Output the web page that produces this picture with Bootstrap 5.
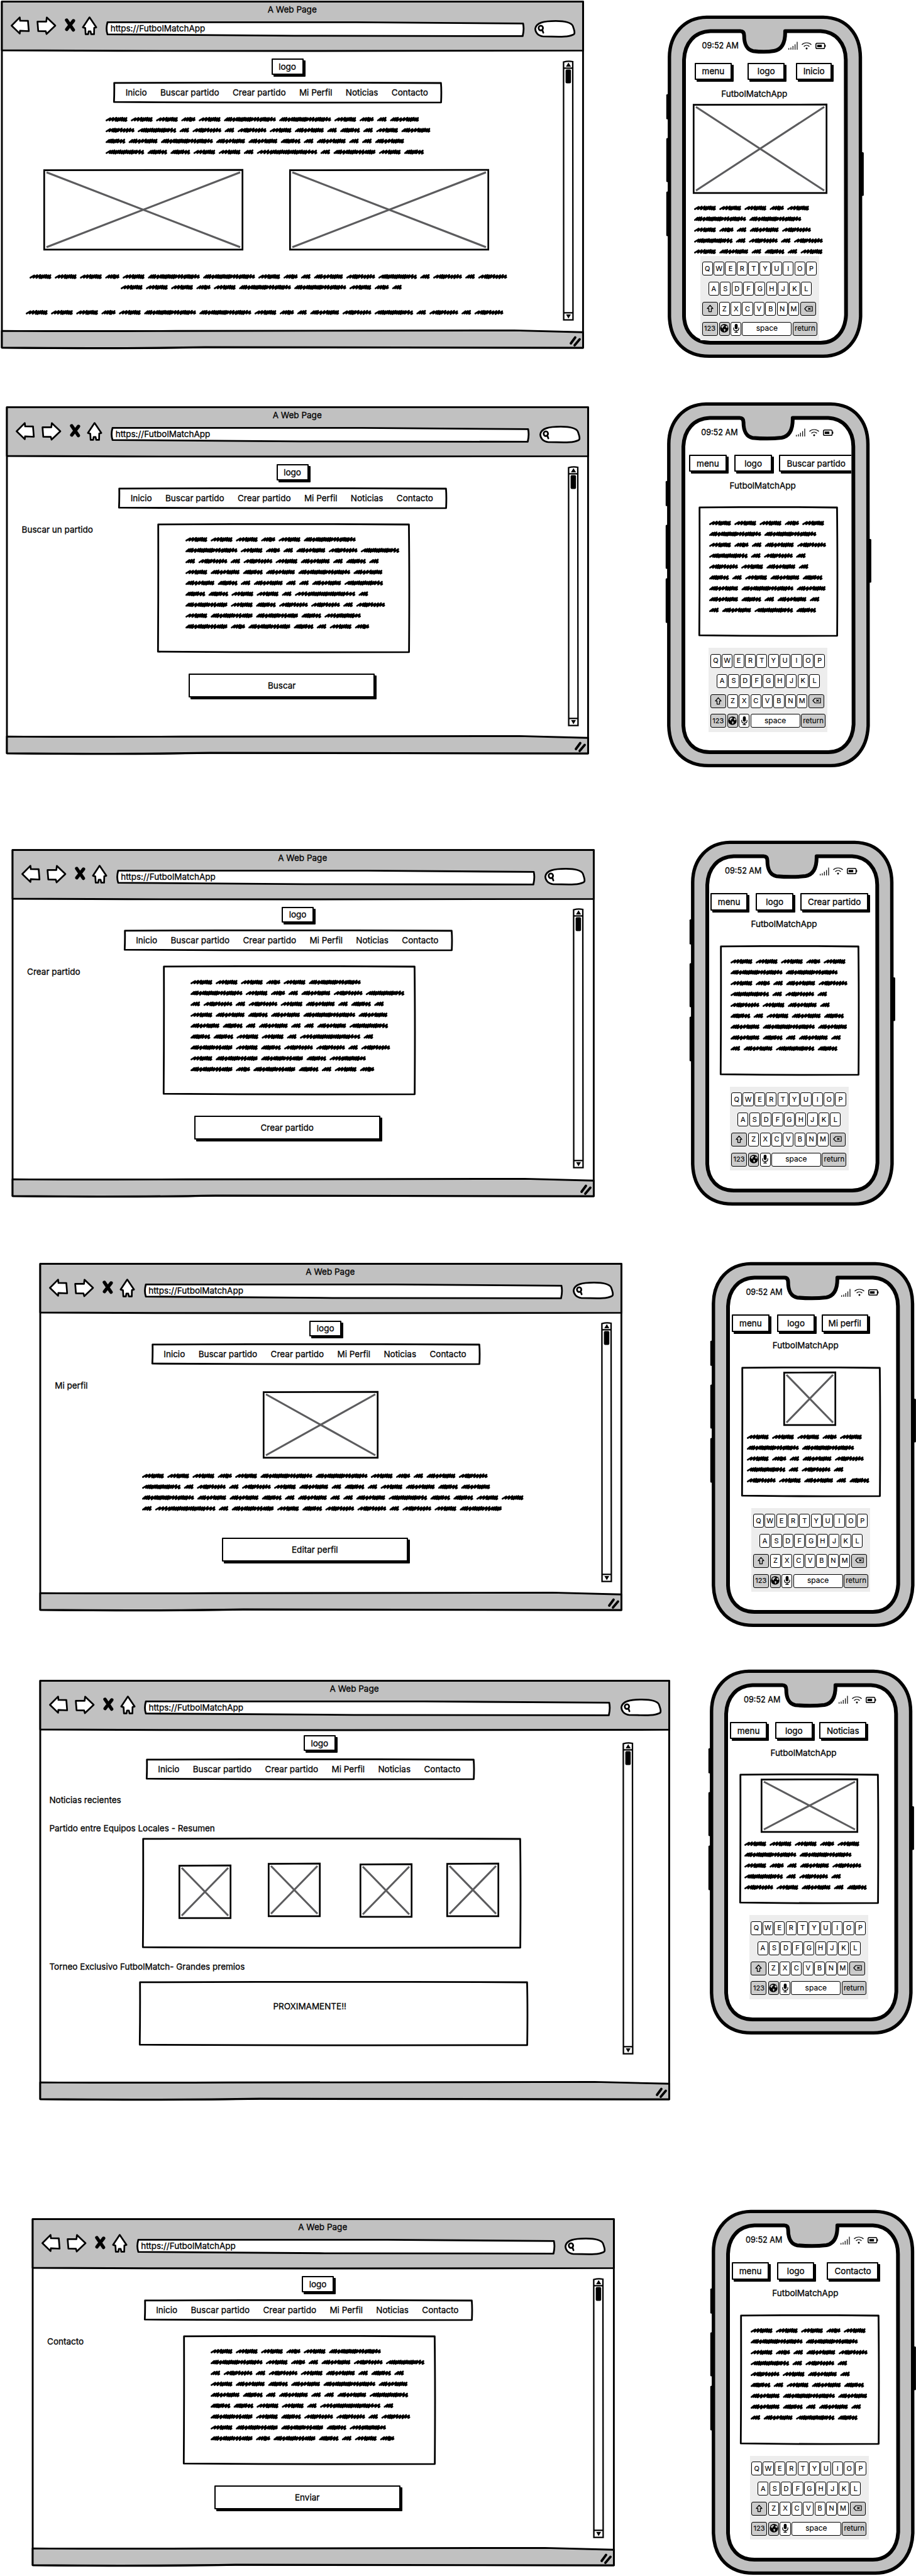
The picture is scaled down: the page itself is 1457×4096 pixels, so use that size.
<!DOCTYPE html>
<html lang="es">
<head>
<meta charset="utf-8">
<meta name="viewport" content="width=device-width, initial-scale=1">
<title>FutbolMatchApp wireframes</title>
<link href="https://cdn.jsdelivr.net/npm/bootstrap@5.3.0/dist/css/bootstrap.min.css" rel="stylesheet">
<style>
  body { font-family: Inter, "Open Sans", sans-serif; font-size: 13.5px; line-height: 20px; color: #000; background: #fff; overflow-x: hidden; -webkit-text-stroke: .3px #000; }
  svg { display: block; overflow: visible; }
  .ink-layer { position: absolute; left: 0; top: 0; pointer-events: none; }
  .ink > :not(.ink-layer), .browser > :not(.ink-layer), .phone > :not(.ink-layer) { position: relative; }

  /* board rows */
  .board { width: 1457px; height: 4096px; overflow: hidden; }
  .r1 { height: 620px; } .r2 { height: 700px; } .r3 { height: 660px; }
  .r4 { height: 650px; } .r5 { height: 860px; } .r6 { height: 606px; }

  /* browser window */
  .browser { width: 927.5px; height: 554px; flex: none; }
  .r1 .browser { margin: 1px 0 0 1px; }
  .r2 .browser { margin: 26px 0 0 9px; }
  .r3 .browser { margin: 29.5px 0 0 17.5px; }
  .r4 .browser { margin: 27.5px 0 0 61.6px; }
  .r5 .browser { margin: 40.6px 0 0 61.8px; width: 1003.6px; height: 669px; }
  .r6 .browser { margin: 37px 0 0 49.5px; }
  .chrome { height: 81px; padding-top: 4px; }
  .tools { height: 34px; padding: 0 13px 0 16.4px; margin-top: 1px; }
  .ico-fwd { margin-left: 10.5px; } .ico-stop { margin-left: 13.5px; } .ico-home { margin-left: 10px; }
  .url-box { height: 24px; margin: 8px 16px 0 14px; padding: 1px 0 0 7.3px; }
  .find-box { width: 65.6px; margin-top: 5.6px; }
  .pane { height: 442px; }
  .r5 .pane { height: 557px; }
  .track { width: 17.6px; height: 413.5px; margin: 13.8px 16px 0 0; }
  .r5 .track { height: 497px; margin: 18px 58.3px 0 0; }

  .sketch-btn { height: 25.5px; background: #fff; border: 2.4px solid #000; box-shadow: 3px 3px 0 #000; color: #000; font-size: 13.5px; line-height: 20px; padding: 0; border-radius: 1px; flex: none; display: flex; align-items: center; justify-content: center; white-space: nowrap; }
  .logo-btn { width: 51px; margin: 11px 0 0 430.6px; }
  .r5 .logo-btn { margin: 7.4px 0 0 421px; }
  .site-nav { width: 522.6px; height: 34px; margin: 11.3px 0 0 179.2px; padding-left: 19.5px; gap: 21.4px; }
  .r5 .site-nav { margin: 11.7px 0 0 170px; }
  .action { width: 296px; height: 38px; margin: 32.6px 0 0 291.2px; }
  .r4 .action { margin-top: 37.3px; }
  .lbl { margin-left: 25.6px; width: 215.9px; flex: none; }
  .panel-row { margin-top: 23.2px; }
  .panel-box { width: 402px; height: 206px; padding: 17.3px 0 0 44.5px; }

  .r1 .p1 { margin: 17.2px 0 0 166.7px; }
  .r1 .shots { margin: 18.8px 0 0 68.4px; gap: 72.7px; }
  .r1 .shot { width: 317.5px; height: 129.2px; }
  .r1 .p2 { margin: 32.4px 0 0 46.4px; }
  .r1 .p3 { margin: 0 0 0 191px; }
  .r1 .p4 { margin: 23.3px 0 0 39.8px; }
  .r4 .lbl { margin-top: 22.5px; }
  .r4 .portrait { width: 183.5px; height: 107px; margin: -.7px 0 0 356.7px; }
  .r4 .p1 { margin: 19px 0 0 164px; }
  .r5 .lbl { margin-left: 16.6px; width: auto; }
  .lbl.n1 { margin-top: 22.2px; } .lbl.n2 { margin-top: 24.2px; } .lbl.n3 { margin-top: 18.8px; }
  .gallery { width: 603px; height: 175.8px; margin: 5.8px 0 0 164.7px; padding: 39.5px 0 0 57.2px; }
  .gallery .shot { width: 83.7px; height: 86px; }
  .gallery .g1 { margin: 3.5px 58.4px 0 0; } .gallery .g2 { margin-right: 63px; } .gallery .g3 { margin: .9px 53.8px 0 0; }
  .soon { width: 619px; height: 103px; margin: 12.6px 0 0 159.4px; padding: 30.5px 0 0 213.2px; }

  /* phone */
  .phone { width: 322.3px; height: 580px; flex: none; }
  .r1 .phone { width: 308.7px; height: 543.8px; margin: 24.7px 0 0 133.5px; }
  .r2 .phone { margin: 19.6px 0 0 124.2px; }
  .r3 .phone { margin: 17px 0 0 153.6px; }
  .r4 .phone { margin: 27px 0 0 142.8px; }
  .r5 .phone { margin: 24.6px 0 0 63.2px; }
  .r6 .phone { margin: 24px 0 0 154.5px; }
  .screen { margin: 0 29px 0 29px; padding-top: 39px; height: 100%; overflow: hidden; }
  .status { height: 18px; padding: 0 27.5px 0 25.5px; font-size: 12.6px; }
  .status-icons { gap: 6px; }
  .keys-top { margin-top: 26.4px; height: 31px; }
  .r1 .keys-top { margin-top: 18px; padding-left: 13.7px; }
  .keys-top .sketch-btn { height: 27.5px; width: 59.5px; }
  .r1 .b2 { margin: 0 17.4px 0 24.8px; } .r1 .keys-top .b3 { width: 57.5px; }
  .r2 .keys-top { padding-left: 6.5px; } .r2 .b2 { margin: 0 10.8px 0 12.7px; } .r2 .keys-top .b3 { width: 119px; }
  .r3 .keys-top { padding-left: 2.3px; } .r3 .b2 { margin: 0 11px 0 13px; } .r3 .keys-top .b3 { width: 108.5px; }
  .r4 .keys-top, .r5 .keys-top, .r6 .keys-top { padding-left: 3.3px; }
  .r4 .b2, .r5 .b2 { margin: 0 10.7px 0 12.7px; } .r4 .keys-top .b3 { width: 74px; } .r5 .keys-top .b3 { width: 75px; }
  .r6 .b2 { margin: 0 20px 0 12.7px; } .r6 .keys-top .b3 { width: 82px; }
  .app-name { margin: 8px 0 0 70.9px; }
  .r1 .app-name { margin-left: 56.2px; } .r3 .app-name { margin-left: 66.8px; }
  .r4 .app-name, .r5 .app-name, .r6 .app-name { margin-left: 67.8px; }
  .screen-box { width: 222px; height: 206.6px; margin: 23.5px 0 0 21px; padding: 17.2px 0 0 17.6px; }
  .r3 .screen-box { margin-left: 17.2px; }
  .r4 .screen-box, .r5 .screen-box { margin-left: 18px; padding: 7.7px 0 0 8.8px; }
  .r6 .screen-box { margin-left: 16px; }
  .r4 .screen-box .shot { width: 84.3px; height: 86px; margin: 0 0 9.3px 57.9px; }
  .r5 .screen-box .shot { width: 155.4px; height: 86px; margin: 0 0 9.3px 25.2px; }
  .r1 .hero { width: 214.2px; height: 143.3px; margin: 6px 0 14px 11.2px; }
  .r1 .screen .hand { margin-left: 13px; }
  .keyboard { width: 189.2px; height: 133.6px; background: #ededed; margin: 18.4px 0 0 37.6px; padding: 9.3px 2.5px; gap: 9.9px; font-size: 11px; flex: none; -webkit-text-stroke-width: .15px; }
  .r1 .keyboard { margin: -1.5px 0 0 23.1px; }
  .r3 .keyboard { margin-left: 33px; } .r4 .keyboard, .r5 .keyboard { margin-left: 34.4px; } .r6 .keyboard { margin-left: 32px; }
  .krow { display: flex; gap: 1.2px; height: 22px; }
  .krow.mid { padding-left: 10.2px; }
  .kkey { width: 17.2px; height: 22px; flex: none; border: 1.4px solid #000; border-radius: 3px; background: #fff; display: flex; align-items: center; justify-content: center; line-height: 18px; padding-bottom: 1px; }
  .kkey.dim { background: #cbcbcb; }
  .kkey.wide { width: 25px; margin-right: .9px; } .kkey.bar { width: 79px; margin-right: .3px; font-size: 12px; } .kkey.ret { width: 39px; font-size: 11.5px; }
  .kkey.del { margin-left: 1px; }
</style>
</head>
<body>
<svg width="0" height="0" class="position-absolute">
  <defs>
    <symbol id="i-shift" viewBox="0 0 12 13"><path d="M6 1 11 6.6H8.2V12H3.8V6.6H1Z" fill="none" stroke="#000" stroke-width="1.4" stroke-linejoin="round"/></symbol>
    <symbol id="i-del" viewBox="0 0 15 10"><path d="M4.6 1H14V9H4.6L1 5Z" fill="none" stroke="#000" stroke-width="1.3" stroke-linejoin="round"/><path d="m7 3.3 4 3.4m0-3.4L7 6.7" stroke="#000" stroke-width="1.4"/></symbol>
    <symbol id="i-globe" viewBox="0 0 14 14"><circle cx="7" cy="7" r="6.7"/><path d="M2 4.5 4.5 2 7.5 2.3 6.6 4 4.8 5 5.2 6.6 3.6 6.8ZM9 3.4 11.5 3 12.6 5.5 10.6 6.6 9.6 5.4ZM6.4 8 8.8 8.4 8.8 10.2 7.4 12.4 6.4 10.6Z" fill="#cbcbcb"/></symbol>
    <symbol id="i-mic" viewBox="0 0 10 14"><rect x="2.7" y="0" width="4.6" height="8.6" rx="2.3"/><path d="M.8 5.8v1.4c0 5 8.4 5 8.4 0V5.8M5 11v2.3M2.4 13.3h5.2" fill="none" stroke="#000" stroke-width="1.2"/></symbol>
    <symbol id="i-signal" viewBox="0 0 15 13"><path d="M.7 10.5V13M4 9.5V13M7.3 7V13M10.6 4.5V13M14 .5V13" stroke="#000" stroke-width="1.2"/></symbol>
    <symbol id="i-wifi" viewBox="0 0 16 12"><path d="M.5 4C4.5 0 11.5 0 15.5 4M3.6 7c2.6-2.6 6.2-2.6 8.8 0" fill="none" stroke="#000" stroke-width="1.2"/><circle cx="8" cy="10" r="1.5"/></symbol>
    <symbol id="i-bat" viewBox="0 0 17 10"><rect x=".8" y=".8" width="13.8" height="8.4" rx="1.8" fill="none" stroke="#000" stroke-width="1.5"/><rect x="2.8" y="3.2" width="7.4" height="3.8"/><path d="M15.6 3.4v3.2" stroke="#000" stroke-width="1.6"/></symbol>
  </defs>
</svg>

<main class="board">
  <section class="board-row r1 d-flex align-items-start">
    <article class="browser position-relative">
      <header class="chrome"></header>
      <div class="pane d-flex justify-content-between">
        <div class="d-flex flex-column align-items-start">
          <button class="sketch-btn logo-btn" type="button">logo</button>
          <nav class="site-nav ink position-relative d-flex align-items-center text-nowrap"></nav>
          <svg class="hand p1" data-words="eeecejjecbf|phbpbpefbdbef|dfjffdbfbbf|hddeebkbied"></svg>
          <div class="shots d-flex"><div class="shot"></div><div class="shot"></div></div>
          <svg class="hand p2" data-words="eeecejjecbfphbpbp"></svg>
          <svg class="hand p3" data-words="eeecejjecb"></svg>
          <svg class="hand p4" data-words="eeecejjecbfphbpbp"></svg>
        </div>
        <svg class="track"></svg>
      </div>
    </article>
    <article class="phone position-relative">
      <div class="screen d-flex flex-column align-items-start">
        <div class="status"></div>
        <div class="keys-top d-flex"><button class="sketch-btn" type="button">menu</button><button class="sketch-btn b2" type="button">logo</button><button class="sketch-btn b3" type="button">Inicio</button></div>
        <div class="app-name">FutbolMatchApp</div>
        <div class="shot hero"></div>
        <svg class="hand" data-words="eeece|jj|ecbfp|hbpbp|efbdbe"></svg>
        <div class="keyboard"></div>
      </div>
    </article>
  </section>

  <section class="board-row r2 d-flex align-items-start">
    <article class="browser position-relative">
      <header class="chrome"></header>
      <div class="pane d-flex justify-content-between">
        <div class="d-flex flex-column align-items-start">
          <button class="sketch-btn logo-btn" type="button">logo</button>
          <nav class="site-nav ink position-relative d-flex align-items-center text-nowrap"></nav>
          <div class="panel-row d-flex align-items-start">
            <div class="lbl">Buscar un partido</div>
            <div class="panel-box ink position-relative"><svg class="hand" data-words="eeecej|jecbfph|bpbpefbdb|efdfjf|fdbfbbfh|ddeebkb|iedppbp|eiidg|icidbec"></svg></div>
          </div>
          <button class="sketch-btn action" type="button">Buscar</button>
        </div>
        <svg class="track"></svg>
      </div>
    </article>
    <article class="phone position-relative">
      <div class="screen d-flex flex-column align-items-start">
        <div class="status"></div>
        <div class="keys-top d-flex"><button class="sketch-btn" type="button">menu</button><button class="sketch-btn b2" type="button">logo</button><button class="sketch-btn b3" type="button">Buscar partido</button></div>
        <div class="app-name">FutbolMatchApp</div>
        <div class="screen-box ink position-relative"><svg class="hand" data-words="eeece|jj|ecbfp|hbpb|pefb|dbefd|fjf|fdbfb|bfhd"></svg></div>
        <div class="keyboard"></div>
      </div>
    </article>
  </section>

  <section class="board-row r3 d-flex align-items-start">
    <article class="browser position-relative">
      <header class="chrome"></header>
      <div class="pane d-flex justify-content-between">
        <div class="d-flex flex-column align-items-start">
          <button class="sketch-btn logo-btn" type="button">logo</button>
          <nav class="site-nav ink position-relative d-flex align-items-center text-nowrap"></nav>
          <div class="panel-row d-flex align-items-start">
            <div class="lbl">Crear partido</div>
            <div class="panel-box ink position-relative"><svg class="hand" data-words="eeecej|jecbfph|bpbpefbdb|efdfjf|fdbfbbfh|ddeebkb|iedppbp|eiidg|icidbec"></svg></div>
          </div>
          <button class="sketch-btn action" type="button">Crear partido</button>
        </div>
        <svg class="track"></svg>
      </div>
    </article>
    <article class="phone position-relative">
      <div class="screen d-flex flex-column align-items-start">
        <div class="status"></div>
        <div class="keys-top d-flex"><button class="sketch-btn" type="button">menu</button><button class="sketch-btn b2" type="button">logo</button><button class="sketch-btn b3" type="button">Crear partido</button></div>
        <div class="app-name">FutbolMatchApp</div>
        <div class="screen-box ink position-relative"><svg class="hand" data-words="eeece|jj|ecbfp|hbpb|pefb|dbefd|fjf|fdbfb|bfhd"></svg></div>
        <div class="keyboard"></div>
      </div>
    </article>
  </section>

  <section class="board-row r4 d-flex align-items-start">
    <article class="browser position-relative">
      <header class="chrome"></header>
      <div class="pane d-flex justify-content-between">
        <div class="d-flex flex-column align-items-start">
          <button class="sketch-btn logo-btn" type="button">logo</button>
          <nav class="site-nav ink position-relative d-flex align-items-center text-nowrap"></nav>
          <div class="lbl">Mi perfil</div>
          <div class="shot portrait"></div>
          <svg class="hand p1" data-words="eeecejjecbfp|hbpbpefbdbefdf|jffdbfbbfhddee|bkbiedppbpei"></svg>
          <button class="sketch-btn action" type="button">Editar perfil</button>
        </div>
        <svg class="track"></svg>
      </div>
    </article>
    <article class="phone position-relative">
      <div class="screen d-flex flex-column align-items-start">
        <div class="status"></div>
        <div class="keys-top d-flex"><button class="sketch-btn" type="button">menu</button><button class="sketch-btn b2" type="button">logo</button><button class="sketch-btn b3" type="button">Mi perfil</button></div>
        <div class="app-name">FutbolMatchApp</div>
        <div class="screen-box ink position-relative"><div class="shot"></div><svg class="hand" data-words="eeece|jj|ecbfp|hbpb|pefbd"></svg></div>
        <div class="keyboard"></div>
      </div>
    </article>
  </section>

  <section class="board-row r5 d-flex align-items-start">
    <article class="browser position-relative">
      <header class="chrome"></header>
      <div class="pane d-flex justify-content-between">
        <div class="d-flex flex-column align-items-start">
          <button class="sketch-btn logo-btn" type="button">logo</button>
          <nav class="site-nav ink position-relative d-flex align-items-center text-nowrap"></nav>
          <div class="lbl n1">Noticias recientes</div>
          <div class="lbl n2">Partido entre Equipos Locales - Resumen</div>
          <div class="gallery ink position-relative d-flex align-items-start"><div class="shot g1"></div><div class="shot g2"></div><div class="shot g3"></div><div class="shot"></div></div>
          <div class="lbl n3">Torneo Exclusivo FutbolMatch- Grandes premios</div>
          <div class="soon ink position-relative"><span>PROXIMAMENTE!!</span></div>
        </div>
        <svg class="track"></svg>
      </div>
    </article>
    <article class="phone position-relative">
      <div class="screen d-flex flex-column align-items-start">
        <div class="status"></div>
        <div class="keys-top d-flex"><button class="sketch-btn" type="button">menu</button><button class="sketch-btn b2" type="button">logo</button><button class="sketch-btn b3" type="button">Noticias</button></div>
        <div class="app-name">FutbolMatchApp</div>
        <div class="screen-box ink position-relative"><div class="shot"></div><svg class="hand" data-words="eeece|jj|ecbfp|hbpb|pefbd"></svg></div>
        <div class="keyboard"></div>
      </div>
    </article>
  </section>

  <section class="board-row r6 d-flex align-items-start">
    <article class="browser position-relative">
      <header class="chrome"></header>
      <div class="pane d-flex justify-content-between">
        <div class="d-flex flex-column align-items-start">
          <button class="sketch-btn logo-btn" type="button">logo</button>
          <nav class="site-nav ink position-relative d-flex align-items-center text-nowrap"></nav>
          <div class="panel-row d-flex align-items-start">
            <div class="lbl">Contacto</div>
            <div class="panel-box ink position-relative"><svg class="hand" data-words="eeecej|jecbfph|bpbpefbdb|efdfjf|fdbfbbfh|ddeebkb|iedppbp|eiidg|icidbec"></svg></div>
          </div>
          <button class="sketch-btn action" type="button">Enviar</button>
        </div>
        <svg class="track"></svg>
      </div>
    </article>
    <article class="phone position-relative">
      <div class="screen d-flex flex-column align-items-start">
        <div class="status"></div>
        <div class="keys-top d-flex"><button class="sketch-btn" type="button">menu</button><button class="sketch-btn b2" type="button">logo</button><button class="sketch-btn b3" type="button">Contacto</button></div>
        <div class="app-name">FutbolMatchApp</div>
        <div class="screen-box ink position-relative"><svg class="hand" data-words="eeece|jj|ecbfp|hbpb|pefb|dbefd|fjf|fdbfb|bfhd"></svg></div>
        <div class="keyboard"></div>
      </div>
    </article>
  </section>
</main>

<script src="https://cdn.jsdelivr.net/npm/bootstrap@5.3.0/dist/js/bootstrap.bundle.min.js"></script>
<script>
const all = (q, f) => document.querySelectorAll(q).forEach(f);
const icon = (id, w, h) => `<svg width="${w}" height="${h}"><use href="#${id}"/></svg>`;

// shared window toolbar
all('.chrome', e => e.innerHTML = `
  <div class="text-center">A Web Page</div>
  <div class="tools d-flex align-items-start">
    <svg width="30" height="29" class="flex-shrink-0" fill="#fff" stroke="#000" stroke-width="2.7" stroke-linejoin="round"><path d="M1.4 14.8 14.4 1.6 15 7 27.5 7.2 28.8 23.5 14.8 22.8 14.4 27.4Z"/></svg>
    <svg width="31.5" height="29" class="flex-shrink-0 ico-fwd" fill="#fff" stroke="#000" stroke-width="2.7" stroke-linejoin="round"><path d="M1.6 8.4 15.6 8.4 16.4 1.8 30 14.8 16 28 14.8 23.6 2.8 23.4Z"/></svg>
    <svg width="17" height="29" class="flex-shrink-0 ico-stop" stroke="#000" stroke-width="5.4" stroke-linecap="round"><path d="M3 6 13.6 21.6M13.8 7 3.2 20.6"/></svg>
    <svg width="24.5" height="30" class="flex-shrink-0 ico-home" fill="#fff" stroke="#000" stroke-width="2.7" stroke-linejoin="round"><path d="M12.4 1.6 1.8 17.4 5.6 18.6 6.2 28.4 10.2 28.4 11 23.8 14 23.8 15 28.4 19.6 28.4 19.8 18.4 23.2 17.4Z"/></svg>
    <div class="url-box ink url position-relative flex-grow-1"><span>https://FutbolMatchApp</span></div>
    <svg class="find-box flex-shrink-0" height="28" fill="none" stroke="#000" stroke-width="2.7"><path fill="#fff" d="M14 26C5 25 1.4 19 1.4 13.6 3 4 15 1.4 34 1.4 52 1.6 59 5 61 9 64 17 65 22 62 23 52 28 34 26 14 26Z"/><ellipse cx="10.2" cy="12.6" rx="3.5" ry="3.8"/><path d="M12.5 15.6 14.2 20" stroke-linecap="round"/></svg>
  </div>`);
all('.site-nav', e => e.innerHTML = ['Inicio', 'Buscar partido', 'Crear partido', 'Mi Perfil', 'Noticias', 'Contacto'].map(t => `<span>${t}</span>`).join(''));

// phone status bar and keyboard
all('.status', e => {
  e.classList.add('d-flex', 'w-100', 'justify-content-between', 'align-items-center');
  e.innerHTML = `<span>09:52 AM</span><span class="status-icons d-flex align-items-center">${icon('i-signal', 15, 13)}${icon('i-wifi', 16, 12)}${icon('i-bat', 17, 10)}</span>`;
});
const k = (t, c = '') => `<span class="kkey ${c}">${t}</span>`;
const run = s => [...s].map(c => k(c)).join('');
all('.keyboard', e => {
  e.classList.add('d-flex', 'flex-column');
  e.innerHTML = `<div class="krow">${run('QWERTYUIOP')}</div><div class="krow mid">${run('ASDFGHJKL')}</div>
  <div class="krow">${k(icon('i-shift', 11, 13), 'dim wide')}${run('ZXCVBNM')}${k(icon('i-del', 14, 10), 'dim wide del')}</div>
  <div class="krow">${k('123', 'dim wide')}${k(icon('i-globe', 14, 14), 'dim')}${k(icon('i-mic', 10, 14))}${k('space', 'bar')}${k('return', 'dim ret')}</div>`;
});

// scribbled placeholder copy: one letter per word length, strokes are loose (s) or dense (d)
const WORDS = { b: [15.5, 'ddd'], c: [22.6, 'sssds'], d: [31.4, 'ddddddss'], e: [34.9, 'sssddddd'], f: [46.2, 'dddsssddddd'], p: [45.8, 'ssdddsssss'],
  g: [57.8, 'ssssddddddddss'], h: [61.3, 'sdddddddddddddss'], i: [67, 'dddssdddddsssdddd'], j: [82.6, 'dddssddddddddsssddddss'], k: [96, 'ssssddddddddddddddddsss'] };
all('.hand', e => {
  const lines = e.dataset.words.split('|');
  let d = '', maxX = 0;
  lines.forEach((ln, r) => {
    let x = 0; const y = 17.3 * r + 8.9;
    for (const c of ln) {
      const [w, pat] = WORDS[c];
      const un = [...pat].map(q => q === 's' ? 1.5 : 1), tot = un.reduce((a, b) => a + b, 0), step = (w - 4.4) / tot;
      let px = x + 1.4; d += `M${px.toFixed(1)} ${(y + 1.6).toFixed(1)}`;
      un.forEach((u, i) => {
        const n = px + u * step, hi = y - 2.1 - (i * 7 % 3) * .35, lo = y + 1.7 + (i * 5 % 4) * .3;
        d += `L${(n + 1.3).toFixed(1)} ${hi.toFixed(1)}L${(n - (u > 1 ? .1 : .5)).toFixed(1)} ${lo.toFixed(1)}`;
        px = n;
      });
      d += `l1.9 -1`;
      x += w + 5.2;
    }
    maxX = Math.max(maxX, x);
  });
  e.setAttribute('width', maxX); e.setAttribute('height', 17.3 * lines.length);
  e.innerHTML = `<path d="${d}" fill="none" stroke="#000" stroke-width="2.7" stroke-linejoin="round" stroke-linecap="round"/>`;
});

// crossed image placeholders
all('.shot', e => {
  const w = e.clientWidth, h = e.clientHeight;
  e.classList.add('flex-shrink-0');
  e.innerHTML = `<svg width="${w}" height="${h}"><path d="M5 5 ${w - 5} ${h - 5}M5 ${h - 5} ${w - 5} 5" stroke="#5c5c5e" stroke-width="3.1"/><path d="M1.3 1.6 ${w - 1.3} 1.2 ${w - 1.3} ${h - 1.2} 1.3 ${h - 1.2}Z" fill="none" stroke="#000" stroke-width="2.7"/></svg>`;
});

// slightly uneven pen outlines
const layer = (e, s) => e.insertAdjacentHTML('afterbegin', `<svg class="ink-layer" width="${e.clientWidth}" height="${e.clientHeight}">${s}</svg>`);
all('.ink', e => {
  const w = e.clientWidth, h = e.clientHeight;
  const d = e.classList.contains('url')
    ? `M3 1.4 ${w * .6} 1.4 ${w - 2} 3.4Q${w} ${h / 2} ${w - 2.6} ${h - .6}L${w * .45} ${h - 1.2} 3 ${h - 3.4}Q0 ${h / 2} 3 1.4Z`
    : `M1.7 1.9 ${w * .3} 1.4 ${w * .7} 1.3 ${w - 1.6} 2Q${w - .6} ${h * .4} ${w - 1.4} ${h - 1.2}L${w * .6} ${h - .8} ${w * .3} ${h - 1.1} 1.3 ${h - 1.8}Q2 ${h * .5} 1.7 1.9Z`;
  layer(e, `<path d="${d}" fill="#fff" stroke="#000" stroke-width="2.8" stroke-linejoin="round"/>`);
});
all('.browser', e => {
  const w = e.clientWidth, h = e.clientHeight, f = h - 29.3;
  layer(e, `<g stroke="#000" stroke-width="2.9" stroke-linejoin="round"><path fill="#fff" d="M2 1.6H${w - 1.6}V${h - 2}L${w * .35} ${h - 2.6}Q${w * .2} ${h} 2 ${h - 2.2}Z"/>
  <path fill="#c1c1c1" d="M2 1.6H${w - 1.6}V79.4L${w * .5} 80 ${w * .2} 79.8 2 79Z"/>
  <path fill="#c1c1c1" d="M2 ${f + .4}Q${w * .1} ${f + 1.2} ${w * .3} ${f + .6}L${w * .88} ${f - .3} ${w - 1.6} ${f + 2.6}V${h - 2}L${w * .35} ${h - 3}Q${w * .2} ${h - .6} 2 ${h - 2.2}Z"/></g>
  <path d="M${w - 20} ${h - 9} ${w - 13} ${h - 18.5}M${w - 14} ${h - 6} ${w - 6} ${h - 15.5}" transform="translate(-1 0)" stroke="#000" stroke-width="3.8" stroke-linecap="round"/>`);
});
all('.track', e => {
  const h = e.clientHeight;
  e.classList.add('flex-shrink-0');
  e.innerHTML = `<g fill="none" stroke="#000" stroke-width="2.3"><path d="M1.4 2.6Q9 .4 16 2L16.4 ${h - 1.4}H1.6Z"/><path d="M1.4 12.4H16.4M1.4 ${h - 12.6}H16.4"/></g>
  <path d="M5.2 10 9.2 3.6 13.2 10ZM5.4 ${h - 10} 13 ${h - 10} 9.2 ${h - 3.4}Z"/><rect x="4.6" y="14.6" width="8.6" height="22" rx="2"/>`;
});
all('.phone', e => {
  const w = e.clientWidth + .3, h = e.clientHeight, l = 26, r = w - 26, t = 24.6, b = h - 24;
  layer(e, `<g><rect x="-2.2" y="124.8" width="6" height="40" rx="1.5"/><rect x="-2.2" y="194.5" width="6" height="70" rx="1.5"/><rect x="-2.2" y="279.5" width="6" height="71" rx="1.5"/><rect x="${w - 3}" y="217" width="5.6" height="69.4" rx="1.5"/></g>
  <path fill="#c0c0c0" stroke="#000" stroke-width="5.4" d="M62 2.4H${w - 62}C${w - 24} 3 ${w - 3} 30 ${w - 2.8} 66L${w - 2.4} ${h - 66}C${w - 4} ${h - 28} ${w - 26} ${h - 3} ${w - 62} ${h - 2.6}H66C28 ${h - 3} 4 ${h - 26} 2.8 ${h - 66}L2.8 66C3 30 26 3 62 2.4Z"/>
  <path fill="#fff" stroke="#000" stroke-width="6" stroke-linejoin="round" d="M68 ${t}H115.5Q121.6 ${t} 121.6 31.6C121.6 46 127 54.6 136 56.2Q${w / 2} 58.6 ${w - 140} 56C${w - 127} 53.6 ${w - 122} 42 ${w - 122.4} ${t}H${w - 66}C${w - 42} ${t + 1} ${r} 44 ${r} 70L${r + .4} ${b - 44}C${r - 1} ${b - 18} ${r - 16} ${b} ${w - 66} ${b}H68C42 ${b} ${l + 1} ${b - 18} ${l} ${b - 42}L${l} 70C${l + 1} 44 42 ${t + 1} 68 ${t}Z"/>`);
});
</script>
</body>
</html>
